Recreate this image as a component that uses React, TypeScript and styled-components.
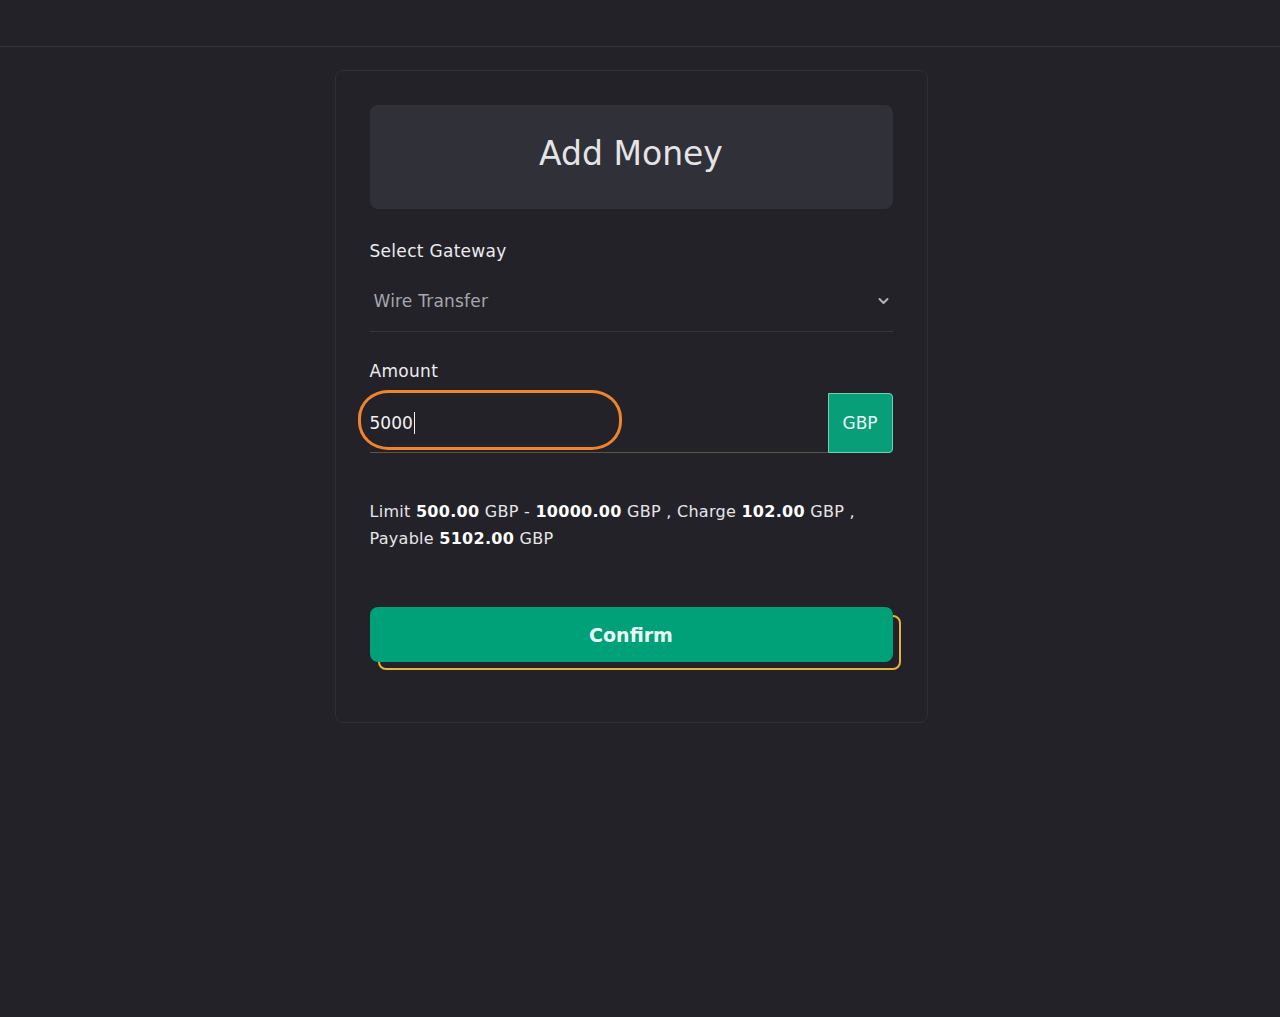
import React, { FunctionComponent } from 'react';
import styled, { createGlobalStyle } from 'styled-components';

const GlobalStyle = createGlobalStyle`
  html, body {
    margin: 0;
    padding: 0;
    background: #222228;
    font-family: 'DejaVu Sans', 'Liberation Sans', sans-serif;
    color: #e6e6e8;
  }
  * {
    box-sizing: border-box;
  }
`;

const Page = styled.div`
  min-height: 1017px;
  background: #222228;
`;

const TopBar = styled.header`
  height: 47px;
  border-bottom: 1px solid #33343d;
`;

const Main = styled.main`
  display: flex;
  justify-content: center;
  padding: 23px 18px 0 0;
`;

const Card = styled.section`
  width: 593px;
  padding: 34px 34px 60px 34px;
  border: 1px solid #2e2f37;
  border-radius: 8px;
  background: #222228;
`;

const TitleBox = styled.div`
  height: 104px;
  display: flex;
  align-items: center;
  justify-content: center;
  padding-bottom: 8px;
  background: #2f3038;
  border-radius: 8px;
`;

const Title = styled.h1`
  margin: 0;
  font-size: 33px;
  font-weight: 400;
  color: #e4e4e6;
`;

const Label = styled.div<{ $top: number }>`
  margin-top: ${p => p.$top}px;
  font-size: 17px;
  line-height: 26px;
  letter-spacing: 0.3px;
  color: #ececee;
`;

const SelectBox = styled.div`
  margin-top: 15px;
  height: 53px;
  padding: 0 4px 9px 4px;
  display: flex;
  align-items: center;
  justify-content: space-between;
  border-bottom: 1px solid #34353e;
  font-size: 17px;
  letter-spacing: 0.2px;
  color: #a6a6ad;
`;

const InputRow = styled.div`
  position: relative;
  margin-top: 9px;
  display: flex;
  align-items: stretch;
  height: 60px;
`;

const InputField = styled.div`
  flex: 1;
  display: flex;
  align-items: center;
  padding-top: 1px;
  border-bottom: 1px solid #5e5446;
  font-size: 17px;
  color: #f2f2f2;
`;

const Caret = styled.span`
  display: inline-block;
  width: 1px;
  height: 22px;
  margin-left: 1px;
  background: #f2f2f2;
`;

const Addon = styled.div`
  width: 65px;
  display: flex;
  align-items: center;
  justify-content: center;
  background: #089e77;
  border: 1px solid #71d2b1;
  border-radius: 0 4px 4px 0;
  font-size: 17px;
  color: #e9fbf4;
`;

const Highlight = styled.div`
  position: absolute;
  left: -12px;
  top: -3px;
  width: 264px;
  height: 60px;
  border: 3px solid #f0842c;
  border-radius: 30px / 28px;
  pointer-events: none;
`;

const Info = styled.p`
  margin: 45px 0 0;
  font-size: 16px;
  line-height: 27px;
  letter-spacing: 0.28px;
  color: #e6e6e8;

  b {
    font-weight: 700;
    color: #ffffff;
  }
`;

const ButtonWrap = styled.div`
  position: relative;
  margin-top: 55px;

  &::after {
    content: '';
    position: absolute;
    top: 8px;
    left: 8px;
    right: -8px;
    bottom: -8px;
    border: 2px solid #e3b440;
    border-radius: 8px;
    z-index: 0;
  }
`;

const ConfirmButton = styled.button`
  position: relative;
  z-index: 1;
  width: 100%;
  height: 55px;
  border: none;
  border-radius: 8px;
  background: #00a078;
  color: #e8fbf5;
  font-family: inherit;
  font-size: 19px;
  font-weight: 700;
  cursor: pointer;
`;

const Chevron: FunctionComponent = () => (
  <svg width="11" height="8" viewBox="0 0 11 8">
    <path d="M1.5 2 L5.5 6 L9.5 2" fill="none" stroke="#b4b4bb" strokeWidth="2" strokeLinecap="round" strokeLinejoin="round" />
  </svg>
);

const App: FunctionComponent = () => {
  return (
    <Page>
      <GlobalStyle />
      <TopBar />
      <Main>
        <Card>
          <TitleBox>
            <Title>Add Money</Title>
          </TitleBox>

          <Label $top={29}>Select Gateway</Label>
          <SelectBox>
            <span>Wire Transfer</span>
            <Chevron />
          </SelectBox>

          <Label $top={26}>Amount</Label>
          <InputRow>
            <InputField>
              5000<Caret />
            </InputField>
            <Addon>GBP</Addon>
            <Highlight />
          </InputRow>

          <Info>
            Limit <b>500.00</b> GBP - <b>10000.00</b> GBP , Charge <b>102.00</b> GBP ,
            <br />
            Payable <b>5102.00</b> GBP
          </Info>

          <ButtonWrap>
            <ConfirmButton>Confirm</ConfirmButton>
          </ButtonWrap>
        </Card>
      </Main>
    </Page>
  );
};

export default App;
